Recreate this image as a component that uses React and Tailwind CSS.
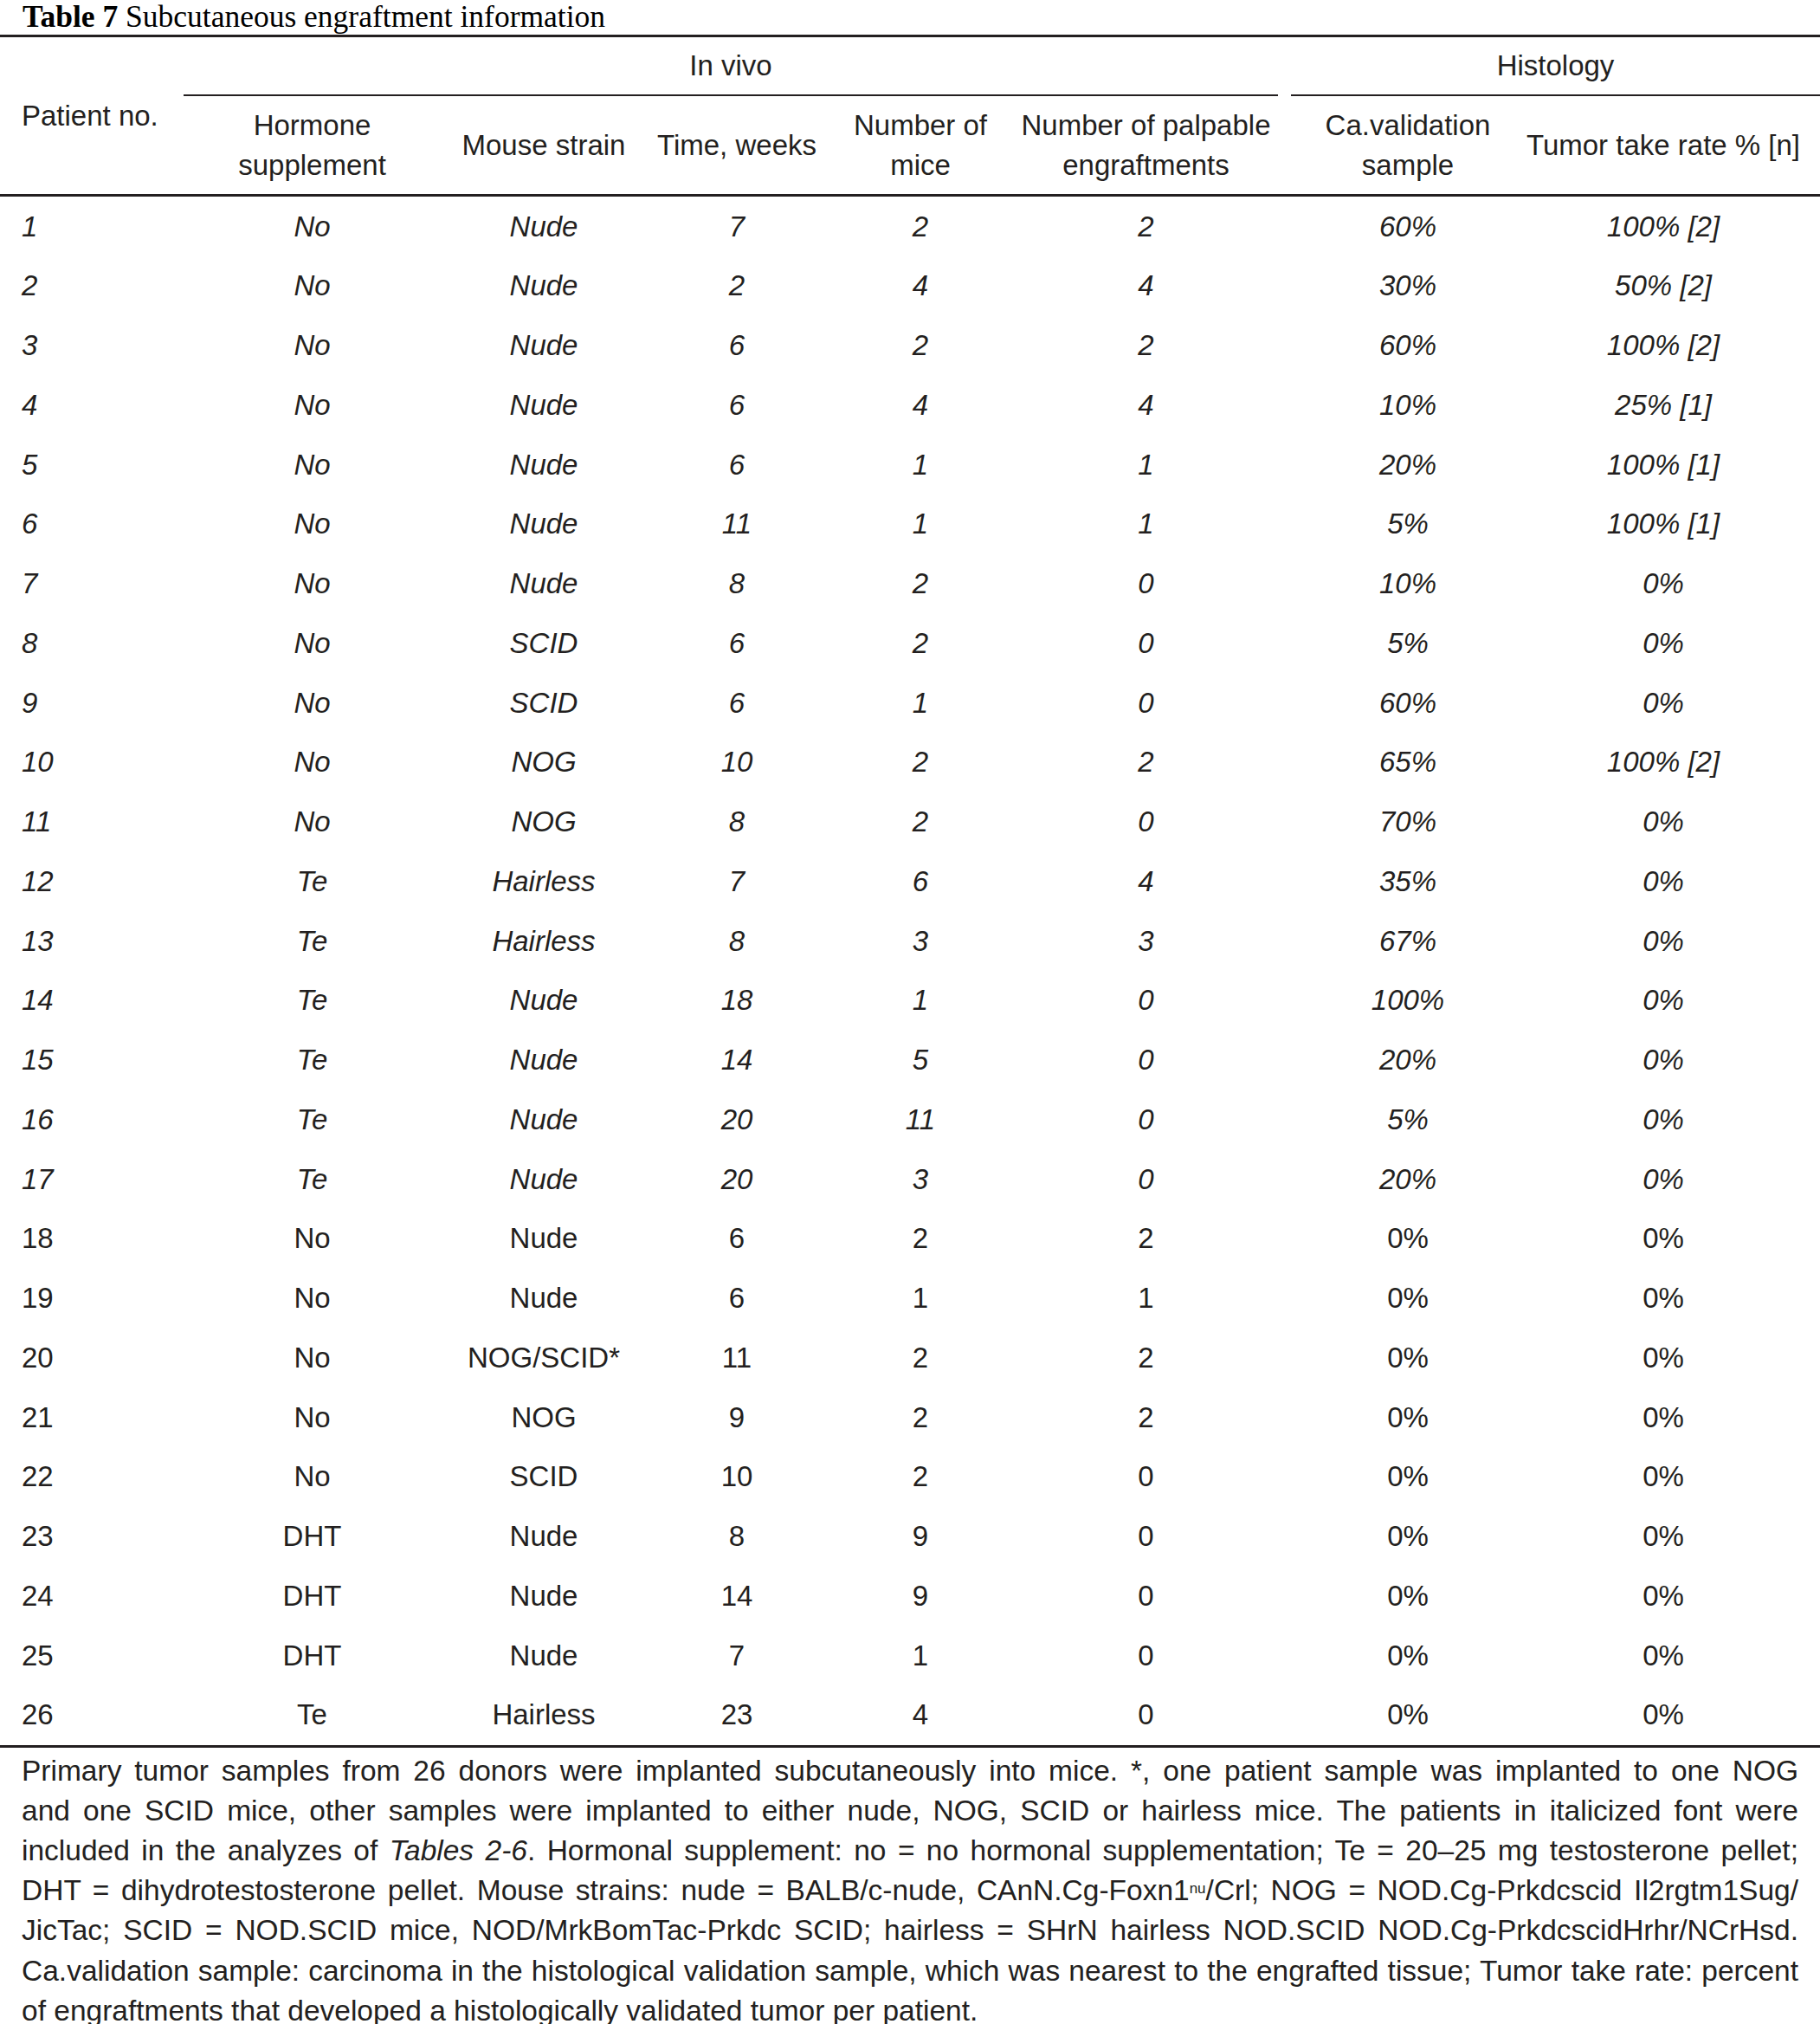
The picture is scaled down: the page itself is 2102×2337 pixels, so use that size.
import React from "react";

const COLS = "grid grid-cols-[212px_297px_238px_208px_216px_305px_285px_341px]";

const rows = [
  ["1", "No", "Nude", "7", "2", "2", "60%", "100% [2]"],
  ["2", "No", "Nude", "2", "4", "4", "30%", "50% [2]"],
  ["3", "No", "Nude", "6", "2", "2", "60%", "100% [2]"],
  ["4", "No", "Nude", "6", "4", "4", "10%", "25% [1]"],
  ["5", "No", "Nude", "6", "1", "1", "20%", "100% [1]"],
  ["6", "No", "Nude", "11", "1", "1", "5%", "100% [1]"],
  ["7", "No", "Nude", "8", "2", "0", "10%", "0%"],
  ["8", "No", "SCID", "6", "2", "0", "5%", "0%"],
  ["9", "No", "SCID", "6", "1", "0", "60%", "0%"],
  ["10", "No", "NOG", "10", "2", "2", "65%", "100% [2]"],
  ["11", "No", "NOG", "8", "2", "0", "70%", "0%"],
  ["12", "Te", "Hairless", "7", "6", "4", "35%", "0%"],
  ["13", "Te", "Hairless", "8", "3", "3", "67%", "0%"],
  ["14", "Te", "Nude", "18", "1", "0", "100%", "0%"],
  ["15", "Te", "Nude", "14", "5", "0", "20%", "0%"],
  ["16", "Te", "Nude", "20", "11", "0", "5%", "0%"],
  ["17", "Te", "Nude", "20", "3", "0", "20%", "0%"],
  ["18", "No", "Nude", "6", "2", "2", "0%", "0%"],
  ["19", "No", "Nude", "6", "1", "1", "0%", "0%"],
  ["20", "No", "NOG/SCID*", "11", "2", "2", "0%", "0%"],
  ["21", "No", "NOG", "9", "2", "2", "0%", "0%"],
  ["22", "No", "SCID", "10", "2", "0", "0%", "0%"],
  ["23", "DHT", "Nude", "8", "9", "0", "0%", "0%"],
  ["24", "DHT", "Nude", "14", "9", "0", "0%", "0%"],
  ["25", "DHT", "Nude", "7", "1", "0", "0%", "0%"],
  ["26", "Te", "Hairless", "23", "4", "0", "0%", "0%"],
];

function Row({ cells, italic }) {
  return (
    <div className={`${COLS} h-[68.75px] items-center ${italic ? "italic" : ""}`}>
      <div className="pl-[25px]">{cells[0]}</div>
      <div className="text-center">{cells[1]}</div>
      <div className="text-center">{cells[2]}</div>
      <div className="text-center">{cells[3]}</div>
      <div className="text-center">{cells[4]}</div>
      <div className="text-center">{cells[5]}</div>
      <div className="text-center pl-[15px]">{cells[6]}</div>
      <div className="text-center pr-[21px]">{cells[7]}</div>
    </div>
  );
}

function Line({ children, last }) {
  return (
    <div className={last ? "text-left" : "text-justify [text-align-last:justify]"}>{children}</div>
  );
}

export default function App() {
  return (
    <div className="w-[2102px] bg-white text-[#231f20] font-['Liberation_Sans',Arial,sans-serif] text-[33px]">
      {/* title */}
      <div className="h-[40px] pl-[26px] font-['Liberation_Serif',serif] text-[35.5px] leading-[38px] text-black">
        <span className="font-bold">Table 7</span> Subcutaneous engraftment information
      </div>

      {/* header */}
      <div className={`${COLS} grid-rows-[68px_113px] border-t-[3px] border-b-[3px] border-[#231f20] leading-[46px]`}>
        <div className="row-span-2 pl-[25px] flex items-center">Patient no.</div>
        <div className="col-span-5 flex items-center justify-center border-b-2 border-[#231f20]">In vivo</div>
        <div className="col-span-2 ml-[15px] flex items-center justify-center border-b-2 border-[#231f20]">Histology</div>
        <div className="flex items-center justify-center text-center">Hormone<br />supplement</div>
        <div className="flex items-center justify-center text-center">Mouse strain</div>
        <div className="flex items-center justify-center text-center">Time, weeks</div>
        <div className="flex items-center justify-center text-center">Number of<br />mice</div>
        <div className="flex items-center justify-center text-center">Number of palpable<br />engraftments</div>
        <div className="flex items-center justify-center text-center pl-[15px]">Ca.validation<br />sample</div>
        <div className="flex items-center justify-center text-center pr-[21px]">Tumor take rate % [n]</div>
      </div>

      {/* body */}
      <div className="border-b-[3px] border-[#231f20]">
        {rows.map((r, i) => (
          <Row key={r[0]} cells={r} italic={i < 17} />
        ))}
      </div>

      {/* footnote */}
      <div className="px-[25px] pt-[4px] text-[33.5px] leading-[46.2px]">
        <Line>Primary tumor samples from 26 donors were implanted subcutaneously into mice. *, one patient sample was implanted to one NOG</Line>
        <Line>and one SCID mice, other samples were implanted to either nude, NOG, SCID or hairless mice. The patients in italicized font were</Line>
        <Line>
          included in the analyzes of <i>Tables 2-6</i>. Hormonal supplement: no = no hormonal supplementation; Te = 20–25 mg testosterone pellet;
        </Line>
        <Line>
          DHT = dihydrotestosterone pellet. Mouse strains: nude = BALB/c-nude, CAnN.Cg-Foxn1<sup className="text-[17px] leading-none">nu</sup>/Crl; NOG = NOD.Cg-Prkdcscid Il2rgtm1Sug/
        </Line>
        <Line>JicTac; SCID = NOD.SCID mice, NOD/MrkBomTac-Prkdc SCID; hairless = SHrN hairless NOD.SCID NOD.Cg-PrkdcscidHrhr/NCrHsd.</Line>
        <Line>Ca.validation sample: carcinoma in the histological validation sample, which was nearest to the engrafted tissue; Tumor take rate: percent</Line>
        <Line last>of engraftments that developed a histologically validated tumor per patient.</Line>
      </div>
    </div>
  );
}
